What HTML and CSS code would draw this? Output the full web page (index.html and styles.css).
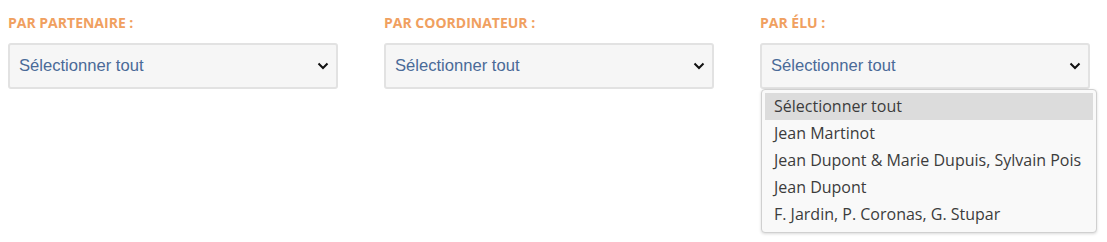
FILE: index.html
```html
<!DOCTYPE html>
<html lang="fr">

<head>
  <meta charset="UTF-8">
  <meta name="viewport" content="width=device-width, initial-scale=1.0">
  <title>Filtres</title>
  <link rel="stylesheet" href="styles.css">
</head>

<body>
  <div class="filters">
    <div class="filter">
      <h4 class="filter-title">Par partenaire :</h4>
      <div class="fake-select">
        <span>Sélectionner tout</span>
        <svg class="chevron" width="12" height="8" viewBox="0 0 12 8"><path d="M1.5 1.5 L6 6 L10.5 1.5" fill="none" stroke="#111" stroke-width="2"/></svg>
      </div>
    </div>
    <div class="filter">
      <h4 class="filter-title">Par coordinateur :</h4>
      <div class="fake-select">
        <span>Sélectionner tout</span>
        <svg class="chevron" width="12" height="8" viewBox="0 0 12 8"><path d="M1.5 1.5 L6 6 L10.5 1.5" fill="none" stroke="#111" stroke-width="2"/></svg>
      </div>
    </div>
    <div class="filter">
      <h4 class="filter-title">Par élu :</h4>
      <div class="fake-select">
        <span>Sélectionner tout</span>
        <svg class="chevron" width="12" height="8" viewBox="0 0 12 8"><path d="M1.5 1.5 L6 6 L10.5 1.5" fill="none" stroke="#111" stroke-width="2"/></svg>
      </div>
      <ul class="options">
        <li class="selected">Sélectionner tout</li>
        <li>Jean Martinot</li>
        <li>Jean Dupont &amp; Marie Dupuis, Sylvain Pois</li>
        <li>Jean Dupont</li>
        <li>F. Jardin, P. Coronas, G. Stupar</li>
      </ul>
    </div>
  </div>
</body>

</html>
```

FILE: styles.css
```css
body {
  margin: 0;
  padding: 8px;
  background-color: #fff;
  font-family: "Liberation Sans", Arial, sans-serif;
}

.filters {
  display: flex;
  gap: 46px;
}

.filter {
  width: 330px;
}

.filter-title {
  margin: 7px 0 12px 0;
  font-family: "Open Sans", sans-serif;
  font-size: 14px;
  font-weight: 700;
  line-height: 16px;
  color: #f0a060; /* orange */
  text-transform: uppercase;
}

.fake-select {
  height: 42px;
  padding: 0 7px 0 9px;
  display: flex;
  align-items: center;
  justify-content: space-between;
  border: 2px solid #e2e2e2;
  border-radius: 3px;
  background-color: #f6f6f6;
  color: #4a6a98; /* blue grey */
  font-size: 16.6px;
}

/* open dropdown list under the last select */
.options {
  width: 336px;
  margin: 0 0 0 1px;
  padding: 3px 3px 4px 3px;
  list-style: none;
  box-sizing: border-box;
  background-color: #f9f9f9;
  border: 1px solid #d0d0d0;
  border-radius: 4px;
  box-shadow: 0 1px 3px rgba(0, 0, 0, 0.15);
  font-family: "Open Sans", sans-serif;
  font-size: 16px;
  color: #3c3c3c;
}

.options li {
  height: 27px;
  line-height: 27px;
  padding: 0 9px;
  white-space: nowrap;
}

.options .selected {
  background-color: #dcdcdc;
}
```
